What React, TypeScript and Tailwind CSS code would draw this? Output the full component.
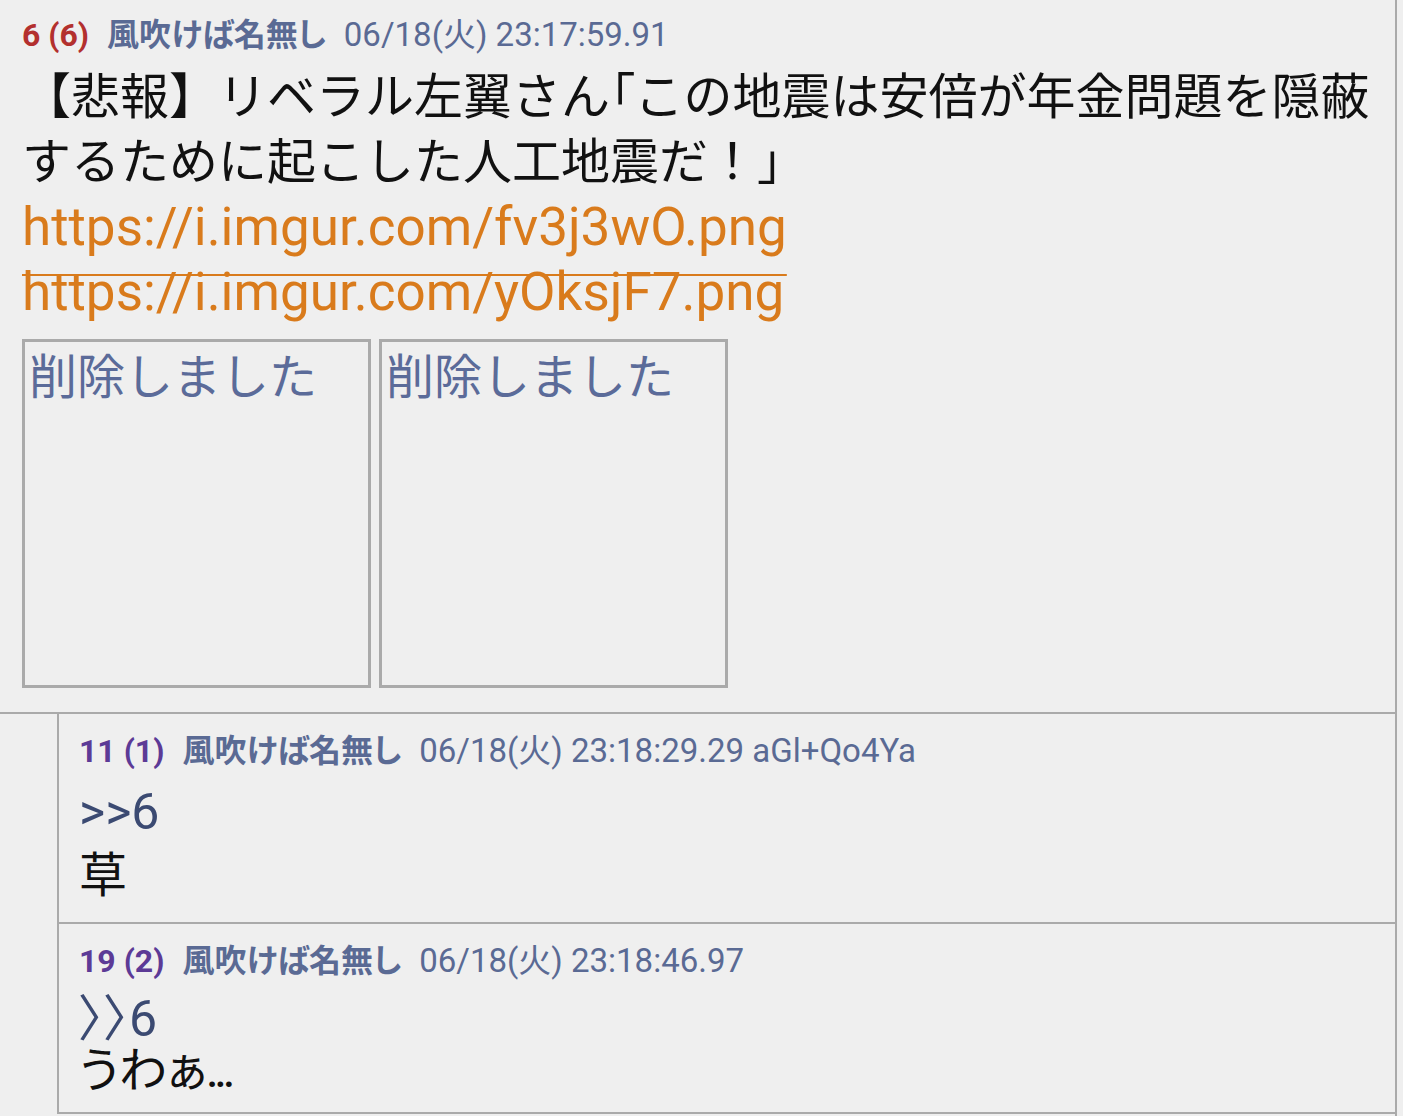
import React from 'react';

const FONT = 'font-[Roboto,"Noto_Sans_CJK_JP",sans-serif]';

interface HeaderProps {
  no: string;
  numClass: string;
  date: string;
}

const PostHeader: React.FC<HeaderProps> = ({ no, numClass, date }) => (
  <div className="flex items-baseline h-[44px] leading-[44px] whitespace-nowrap">
    <span className={`text-[32px] font-bold ${numClass}`}>{no}</span>
    <span className="ml-[18px] text-[32px] font-bold text-[#5a6a94] [font-feature-settings:'palt']">風吹けば名無し</span>
    <span className="ml-[18px] text-[33px] text-[#5a6a94]">{date}</span>
  </div>
);

const DeletedBox = () => (
  <div className="w-[349px] h-[349px] border-[3px] border-[#aaaaaa] px-[4px] pt-[4px]">
    <span className="text-[48px] leading-[64px] text-[#5b6b99]">削除しました</span>
  </div>
);

export default function App() {
  return (
    <div className={`min-h-screen bg-[#efefef] ${FONT}`}>
      <div className="w-[1397px] min-h-[1116px] border-r-2 border-[#aaaaaa]">
        {/* main post */}
        <article className="border-b-2 border-[#aaaaaa] pl-[22px] pt-[13px] pb-[24px]">
          <PostHeader no="6 (6)" numClass="text-[#b3302e]" date="06/18(火) 23:17:59.91" />
          <div className="mt-[8px] text-[49px] leading-[65px] text-[#111] whitespace-nowrap">
            <div className="h-[65px]">
              【悲報】リベラル左翼さん<span className="[font-feature-settings:'palt']">「</span>この地震は安倍が年金問題を隠蔽
            </div>
            <div className="h-[65px]">するために起こした人工地震だ！」</div>
            <div className="h-[65px]">
              <a className="text-[#d97b1c] text-[53px] underline decoration-2 underline-offset-[29px] decoration-[#d97b1c]">
                https://i.imgur.com/fv3j3wO.png
              </a>
            </div>
            <div className="h-[65px]">
              <a className="text-[#d97b1c] text-[53px]">https://i.imgur.com/yOksjF7.png</a>
            </div>
          </div>
          <div className="mt-[14px] flex gap-[8px]">
            <DeletedBox />
            <DeletedBox />
          </div>
        </article>

        {/* replies */}
        <div className="pl-[57px]">
          <article className="border-l-2 border-b-2 border-[#aaaaaa] pl-[20px] pt-[15px] pb-[15px]">
            <PostHeader no="11 (1)" numClass="text-[#5c3a96]" date="06/18(火) 23:18:29.29 aGl+Qo4Ya" />
            <div className="mt-[8px] leading-[63px]">
              <div className="h-[63px] text-[50px] text-[#3b4a72]">&gt;&gt;6</div>
              <div className="h-[63px] text-[48px] text-[#111]">草</div>
            </div>
          </article>
          <article className="border-l-2 border-b-2 border-[#aaaaaa] pl-[20px] pt-[15px] pb-[15px]">
            <PostHeader no="19 (2)" numClass="text-[#5c3a96]" date="06/18(火) 23:18:46.97" />
            <div className="mt-[10px] leading-[52px] [font-feature-settings:'palt']">
              <div className="h-[52px] text-[50px] text-[#3b4a72]">〉〉6</div>
              <div className="h-[52px] text-[48px] text-[#111]">
                うわぁ<span className="text-[36px] leading-none font-bold tracking-[-2px]">...</span>
              </div>
            </div>
          </article>
        </div>
      </div>
    </div>
  );
}
